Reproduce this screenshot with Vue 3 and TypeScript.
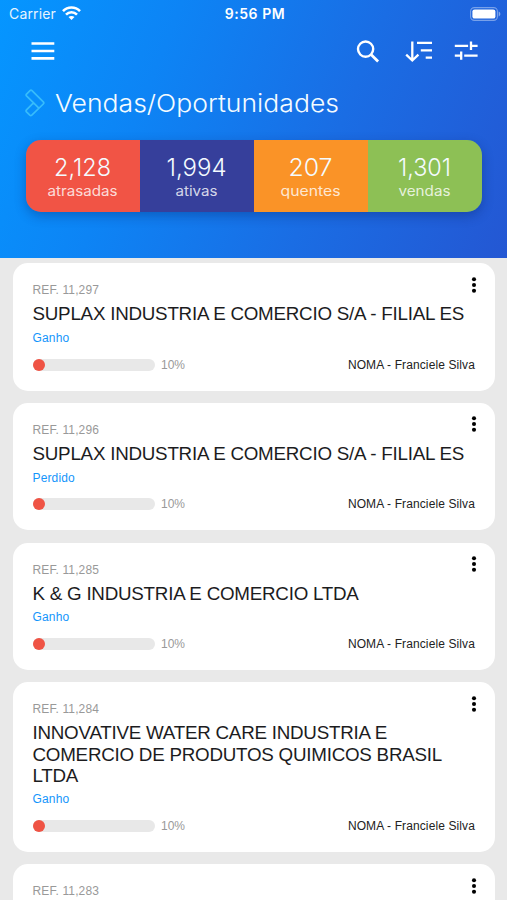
<script setup lang="ts">
interface Stat {
  value: string
  label: string
  tone: string
  valueWidth: number
  labelWidth: number
}

interface Opportunity {
  refNo: string
  title?: string
  status?: string
  progress?: number
  owner?: string
}

const stats: Stat[] = [
  { value: '2,128', label: 'atrasadas', tone: 'red', valueWidth: 57, labelWidth: 70 },
  { value: '1,994', label: 'ativas', tone: 'indigo', valueWidth: 60, labelWidth: 42 },
  { value: '207', label: 'quentes', tone: 'orange', valueWidth: 44, labelWidth: 60 },
  { value: '1,301', label: 'vendas', tone: 'green', valueWidth: 53, labelWidth: 52 },
]

const owner = 'NOMA - Franciele Silva'
const opportunities: Opportunity[] = [
  { refNo: '11,297', title: 'SUPLAX INDUSTRIA E COMERCIO S/A - FILIAL ES', status: 'Ganho', progress: 10, owner },
  { refNo: '11,296', title: 'SUPLAX INDUSTRIA E COMERCIO S/A - FILIAL ES', status: 'Perdido', progress: 10, owner },
  { refNo: '11,285', title: 'K & G INDUSTRIA E COMERCIO LTDA', status: 'Ganho', progress: 10, owner },
  { refNo: '11,284', title: 'INNOVATIVE WATER CARE INDUSTRIA E COMERCIO DE PRODUTOS QUIMICOS BRASIL LTDA', status: 'Ganho', progress: 10, owner },
  { refNo: '11,283' },
]
</script>

<template>
  <div class="screen">
    <header class="header">
      <div class="status-bar">
        <div class="carrier">
          <span>Carrier</span>
          <svg width="19" height="15" viewBox="0 0 19 15" fill="none" stroke="#fff" stroke-width="2.6">
            <path d="M1 5.2C5.7.3 13.3.3 18 5.2" />
            <path d="M4 8.6c3.1-3.2 7.9-3.2 11 0" />
            <path d="M6.5 11.1c1.7-1.6 4.3-1.6 6 0l-3 3z" fill="#fff" stroke="none" />
          </svg>
        </div>
        <span class="clock">9:56 PM</span>
        <svg class="battery" width="31" height="14" viewBox="0 0 31 14">
          <rect x=".6" y=".6" width="26.8" height="12.8" rx="3.8" fill="none" stroke="#fff" stroke-opacity=".4" stroke-width="1.1" />
          <rect x="2.4" y="2.4" width="23" height="9.2" rx="2.2" fill="#fff" />
          <path d="M28.7 4.6c2.2.7 2.2 4.1 0 4.8z" fill="#fff" fill-opacity=".45" />
        </svg>
      </div>

      <nav class="toolbar">
        <button class="icon" aria-label="Menu">
          <svg width="24" height="20" viewBox="0 0 24 20" stroke="#fff" stroke-width="2.7">
            <path d="M.5 2.5h22.8M.5 10h22.8M.5 17.4h22.8" />
          </svg>
        </button>
        <div class="actions">
          <button class="icon" aria-label="Buscar">
            <svg width="24" height="24" viewBox="0 0 24 24" fill="none" stroke="#fff" stroke-width="2.4">
              <circle cx="9.6" cy="10.1" r="7.6" />
              <path d="M15 15.5l7.1 7" stroke-width="2.8" />
            </svg>
          </button>
          <button class="icon" aria-label="Ordenar">
            <svg width="28" height="24" viewBox="0 0 28 24" fill="none" stroke="#fff" stroke-width="2.3">
              <path d="M7.3 2.4v19M1.2 15.7l6.1 5.8 6.1-5.8M12 3.9h15M15.8 11.3H27M20.7 18.7H27" />
            </svg>
          </button>
          <button class="icon" aria-label="Filtrar">
            <svg width="24" height="24" viewBox="0 0 24 24" fill="none" stroke="#fff" stroke-width="2.3">
              <path d="M.8 6.8h13.3M17.5 6.8h6.1M17 2.6v8.4M.8 16.6h6.1M10.2 16.6h13.4M7.2 12.4v8.4" />
            </svg>
          </button>
        </div>
      </nav>

      <h1 class="heading">
        <svg width="21" height="28" viewBox="0 0 21 28" fill="none" stroke="#37bcfb" stroke-width="1.7" stroke-linejoin="round">
          <path d="M1.5 5.1L5 1.6q1-.9 2 0l11.3 11.3q1 1.1 0 2.1L6.8 26.2q-1 .9-2 0l-3.3-3.3q-.9-1 0-2l7.2-7.2M1.5 5.1q-.8.9 0 1.8l11.9 11.7" />
        </svg>
        <svg class="fit" width="290" height="34">
          <text x="0" y="25.5" font-size="24" textLength="284" lengthAdjust="spacingAndGlyphs">Vendas/Oportunidades</text>
        </svg>
      </h1>

      <div class="stats">
        <div v-for="s in stats" :key="s.label" class="stat" :class="s.tone">
          <svg class="fit" width="110" height="72">
            <text x="54.5" y="35.7" font-size="24.5" text-anchor="middle" :textLength="s.valueWidth" lengthAdjust="spacingAndGlyphs">{{ s.value }}</text>
            <text class="label" x="54.5" y="56" font-size="14" text-anchor="middle" :textLength="s.labelWidth" lengthAdjust="spacingAndGlyphs">{{ s.label }}</text>
          </svg>
        </div>
      </div>
    </header>

    <main class="list">
      <article v-for="o in opportunities" :key="o.refNo" class="card">
        <div class="ref">REF. {{ o.refNo }}</div>
        <h2 v-if="o.title" class="title">{{ o.title }}</h2>
        <div v-if="o.status" class="state">{{ o.status }}</div>
        <div v-if="o.progress !== undefined" class="foot">
          <div class="track"><div class="fill" :style="{ width: o.progress + '%' }"></div></div>
          <span class="percent">{{ o.progress }}%</span>
          <span class="owner">{{ o.owner }}</span>
        </div>
        <button class="more" aria-label="Mais">
          <svg width="6" height="16" viewBox="0 0 6 16" fill="#000">
            <circle cx="3" cy="2.3" r="2.05" />
            <circle cx="3" cy="8" r="2.05" />
            <circle cx="3" cy="13.7" r="2.05" />
          </svg>
        </button>
      </article>
    </main>
  </div>
</template>

<style>
body {
  background: #e9e9e9;
}
</style>

<style scoped>
.screen {
  box-sizing: border-box;
  width: 100%;
  height: 900px;
  overflow: hidden;
  background: #e9e9e9;
  font-family: "Liberation Sans", Arial, sans-serif;
}
.screen svg {
  display: block;
  flex: none;
}
button {
  padding: 0;
  border: 0;
  background: none;
}
.header {
  box-sizing: border-box;
  height: 257.5px;
  overflow: hidden;
  background: linear-gradient(112deg, #0596ff 0%, #0d84f5 30%, #1a6de4 64%, #2457d3 100%);
  color: #fff;
}
.status-bar {
  display: grid;
  grid-template-columns: 1fr auto 1fr;
  align-items: center;
  height: 27px;
  padding: 0 6px 0 9px;
  font-family: Inter, sans-serif;
  font-size: 14px;
}
.carrier {
  display: flex;
  align-items: center;
  gap: 6px;
  letter-spacing: 0.15px;
}
.carrier span {
  opacity: 0.9;
}
.clock {
  font-size: 14px;
  font-weight: 600;
  letter-spacing: 0.55px;
}
.battery {
  justify-self: end;
}
.toolbar {
  display: flex;
  justify-content: space-between;
  align-items: center;
  height: 48px;
  padding: 0 29.5px 0 30.5px;
}
.actions {
  display: flex;
  gap: 21px;
}
.actions .icon:first-child {
  margin-right: 4px;
}
.heading {
  display: flex;
  align-items: center;
  gap: 9px;
  height: 56px;
  margin: 0;
  padding-left: 25px;
}
.fit {
  font-family: Inter, sans-serif;
  font-weight: 300;
  fill: #f4fbff;
}
.label {
  font-weight: 400;
  fill: rgba(255, 255, 255, 0.8);
}
.stats {
  display: grid;
  grid-template-columns: repeat(4, 1fr);
  height: 72.3px;
  margin: 8.8px 25px 0 25.5px;
  border-radius: 15px;
  overflow: hidden;
  box-shadow: 0 4px 12px rgba(0, 20, 80, 0.3);
}
.stat {
  display: flex;
  justify-content: center;
}
.red { background: #f15445; }
.indigo { background: #363f9b; }
.orange { background: #fa9327; }
.green { background: #8dc055; }
.list {
  display: flex;
  flex-direction: column;
  gap: 12.2px;
  padding: 5.8px 12.5px 0 13px;
}
.card {
  position: relative;
  box-sizing: border-box;
  min-height: 127.5px;
  padding: 20px 19.5px 20px;
  border-radius: 15px;
  background: #fff;
}
.ref {
  height: 15px;
  font-size: 12px;
  line-height: 15px;
  letter-spacing: 0.12px;
  color: #999;
}
.title {
  margin: 5px 0 0;
  font-size: 18.8px;
  font-weight: 400;
  line-height: 21.2px;
  letter-spacing: -0.24px;
  color: #1c1c1e;
}
.state {
  margin-top: 6.5px;
  height: 15px;
  font-size: 12px;
  line-height: 15px;
  letter-spacing: 0.15px;
  color: #1495fb;
}
.foot {
  display: flex;
  align-items: center;
  height: 12px;
  margin-top: 12.8px;
  font-size: 12px;
}
.track {
  width: 122.5px;
  height: 12px;
  border-radius: 6px;
  background: #e8e8e8;
}
.fill {
  height: 12px;
  border-radius: 6px;
  background: #ef5344;
}
.percent {
  margin-left: 6px;
  color: #999;
}
.owner {
  margin-left: auto;
  letter-spacing: 0.11px;
  color: #222;
}
.more {
  position: absolute;
  top: 13.3px;
  right: 17.5px;
}
</style>
